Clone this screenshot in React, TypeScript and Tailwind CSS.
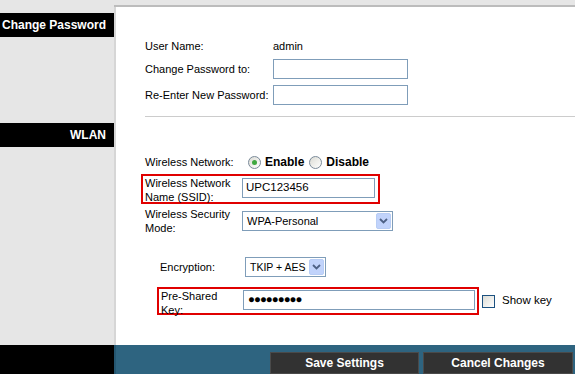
import React from "react";

const Radio = ({ checked }: { checked?: boolean }) => (
  <span className="relative inline-flex h-[13px] w-[13px] items-center justify-center rounded-full border border-[#7a8a99] bg-gradient-to-br from-[#dcdcd5] to-[#ffffff]">
    {checked && <span className="h-[5px] w-[5px] rounded-full bg-[#3fa83f]" />}
  </span>
);

const Select = ({ value, width, textClass = "text-[11px]" }: { value: string; width: string; textClass?: string }) => (
  <div className={`flex h-[20px] items-center gap-[2px] border border-[#7f9db9] bg-white pl-[4px] pr-[1px] ${width}`}>
    <span className={`flex-1 whitespace-nowrap leading-none text-black ${textClass}`}>{value}</span>
    <span className="flex h-[16px] w-[15px] shrink-0 items-center justify-center rounded-[2px] border border-[#b8cdf5] bg-[#c1d3fb]">
      <svg width="9" height="6" viewBox="0 0 9 6">
        <path d="M1 1 L4.5 4.5 L8 1" stroke="#4d6185" strokeWidth="1.8" fill="none" />
      </svg>
    </span>
  </div>
);

const SideBar = ({ title, className }: { title: string; className: string }) => (
  <div className={`flex h-[24px] items-center justify-end bg-black pr-[8px] text-[12px] font-bold text-white ${className}`}>
    {title}
  </div>
);

export default function App() {
  return (
    <div className="flex h-[374px] w-[575px] flex-col overflow-hidden bg-[#e6e6e6] font-['Liberation_Sans',Arial,sans-serif] text-[11px] text-black">
      <div className="flex flex-1">
        <aside className="w-[114px] shrink-0">
          <SideBar title="Change Password" className="mt-[13px]" />
          <SideBar title="WLAN" className="mt-[86px]" />
        </aside>

        <main className="flex flex-1 flex-col">
          <div className="h-[7px] border-b-2 border-[#bcbcbc] bg-[#e6e6e6]" />
          <div className="flex-1 border-l-2 border-[#d6d6d6] bg-white pl-[29px]">
            <div className="mt-[29px] flex h-[20px] items-center">
              <span className="w-[128px]">User Name:</span>
              <span>admin</span>
            </div>
            <div className="mt-[3px] flex h-[20px] items-center">
              <span className="w-[128px]">Change Password to:</span>
              <div className="h-[20px] w-[135px] border border-[#7f9db9] bg-white" />
            </div>
            <div className="mt-[6px] flex h-[20px] items-center">
              <span className="w-[128px]">Re-Enter New Password:</span>
              <div className="h-[20px] w-[135px] border border-[#7f9db9] bg-white" />
            </div>
            <div className="mt-[11px] h-px bg-[#cccccc]" />

            <div className="mt-[35px] flex h-[20px] items-center">
              <span className="w-[103px]">Wireless Network:</span>
              <label className="flex items-center gap-[4px]">
                <Radio checked />
                <span className="text-[12px] font-bold">Enable</span>
              </label>
              <label className="ml-[5px] flex items-center gap-[4px]">
                <Radio />
                <span className="text-[12px] font-bold">Disable</span>
              </label>
            </div>

            <div className="-ml-[4px] mt-[2px] flex h-[30px] w-[239px] items-start border-2 border-[#e00000] pl-[2px]">
              <span className="w-[97px] leading-[14px]">
                Wireless Network
                <br />
                Name (SSID):
              </span>
              <div className="mt-[2px] flex h-[20px] w-[133px] items-center border border-[#7f9db9] bg-white pl-[3px] text-[11.5px]">
                UPC123456
              </div>
            </div>

            <div className="mt-[3px] flex items-start">
              <span className="w-[97px] leading-[14px]">
                Wireless Security
                <br />
                Mode:
              </span>
              <div className="mt-[4px]">
                <Select value="WPA-Personal" width="w-[151px]" />
              </div>
            </div>

            <div className="ml-[15px] mt-[22px] flex h-[20px] items-center">
              <span className="w-[85px]">Encryption:</span>
              <Select value="TKIP + AES" width="w-[81px]" textClass="text-[10.5px]" />
            </div>

            <div className="ml-[12px] mt-[10px] flex items-center">
              <div className="flex h-[28px] w-[322px] items-start border-2 border-[#e00000] pl-[2px]">
                <span className="w-[82px] leading-[14px]">
                  Pre-Shared
                  <br />
                  Key:
                </span>
                <div className="mt-px flex h-[20px] w-[232px] items-center border border-[#7f9db9] bg-white pl-[4px] text-[11.5px] tracking-[-1px]">
                  ●●●●●●●●●
                </div>
              </div>
              <span className="ml-[3px] h-[13px] w-[13px] border border-[#1c5180] bg-gradient-to-br from-[#dcdcd5] to-[#ffffff]" />
              <span className="ml-[7px] text-[11.5px]">Show key</span>
            </div>
          </div>
        </main>
      </div>

      <footer className="flex h-[29px] shrink-0">
        <div className="w-[114px] bg-black" />
        <div className="flex flex-1 items-end justify-end gap-[4px] border-l-2 border-[#245670] bg-[#2e6480] pr-[2px]">
          <button className="h-[22px] w-[149px] border border-[#4a4a4a] bg-[#323232] text-[12px] font-bold text-white">
            Save Settings
          </button>
          <button className="h-[22px] w-[150px] border border-[#4a4a4a] bg-[#323232] text-[12px] font-bold text-white">
            Cancel Changes
          </button>
        </div>
      </footer>
    </div>
  );
}
